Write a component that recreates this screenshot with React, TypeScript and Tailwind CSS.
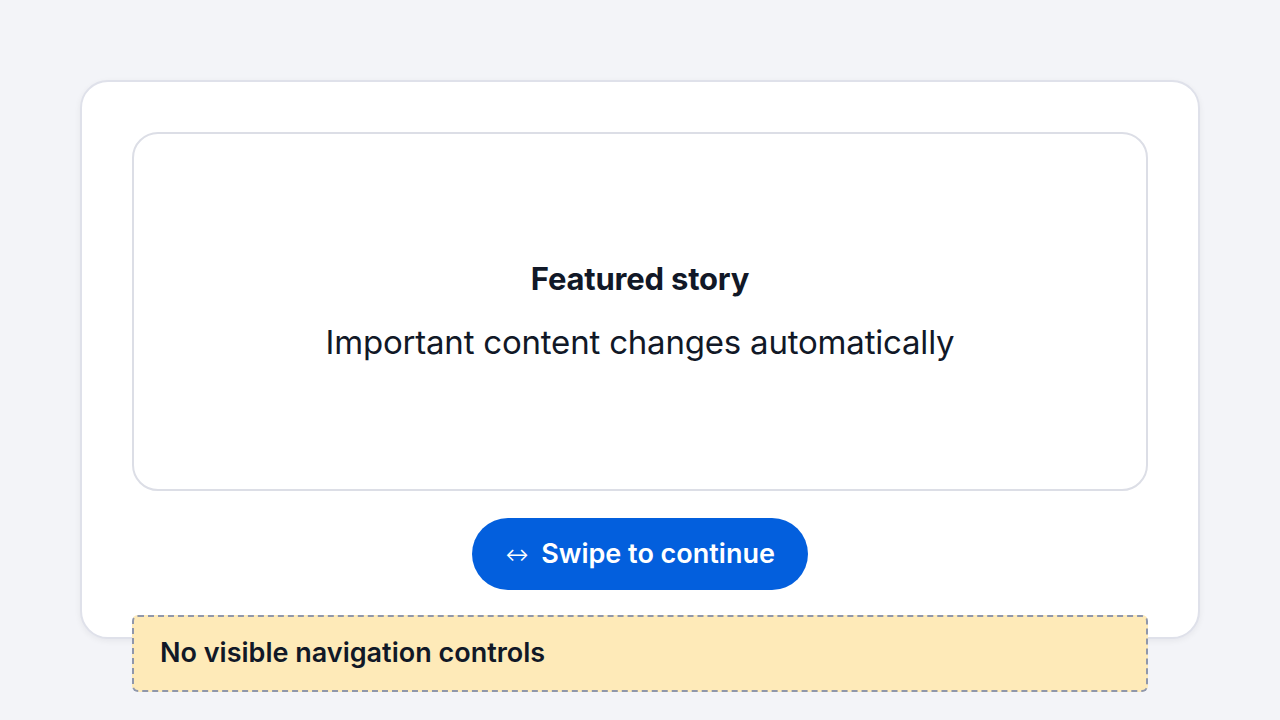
import React from 'react';

// Auto-advancing carousel demo: a single slide, a swipe hint and a note
// pointing out that there are no prev/next controls on screen.
export default function App() {
  return (
    <div className="min-h-screen bg-[#f3f4f8] px-20 pt-20 font-['Inter',sans-serif] text-[#111827]">
      <section className="h-[559px] rounded-[28px] border-2 border-[#dfe1ea] bg-white px-[50px] pt-[50px] shadow-[0_2px_6px_rgba(15,23,42,0.06)]">
        <div className="flex h-[359px] flex-col items-center justify-center gap-[24px] rounded-[26px] border-2 border-[#dcdee6]">
          <h2 className="text-[31px] font-bold leading-tight tracking-[-0.2px]">Featured story</h2>
          <p className="text-[33px] leading-tight tracking-[-0.2px]">Important content changes automatically</p>
        </div>
        <div className="mt-[27px] flex justify-center">
          <button className="flex h-[72px] w-[336px] items-center justify-center gap-3 rounded-full bg-[#035fdd] text-[27px] font-semibold text-white">
            <span className="text-[18px] font-normal">↔</span>
            <span>Swipe to continue</span>
          </button>
        </div>
        <div className="mt-[25px] flex h-[77px] items-center rounded-md border-2 border-dashed border-[#8f97ab] bg-[#feeab8] px-[26px] text-[27px] font-semibold">
          No visible navigation controls
        </div>
      </section>
    </div>
  );
}
